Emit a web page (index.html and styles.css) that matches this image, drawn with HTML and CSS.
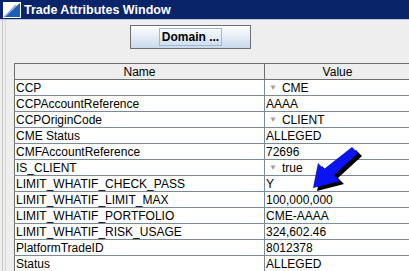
FILE: index.html
```html
<!DOCTYPE html>
<html lang="en">
<head>
    <meta charset="UTF-8">
    <title>Trade Attributes Window</title>
    <link rel="stylesheet" href="styles.css">
</head>
<body>

<div class="titlebar">
    <svg class="app-icon" width="18" height="16" viewBox="0 0 18 16">
        <rect x="0" y="0" width="18" height="16" fill="#ffffff"/>
        <path d="M1 15 C5 13 8 9 17 1 L17 15 Z" fill="#1d5fb8"/>
        <path d="M1 15 C5 12 9 7 13 3" stroke="#7aa8e0" stroke-width="1.5" fill="none"/>
    </svg>
    <span class="title">Trade Attributes Window</span>
</div>

<div class="window">
    <div class="edge"></div>
    <div class="panel">
        <div class="toolbar">
            <button class="domain-btn"><span class="focus">Domain ...</span></button>
        </div>

        <table class="attrs">
            <thead>
                <tr><th class="col-name">Name</th><th>Value</th></tr>
            </thead>
            <tbody>
                <tr><td>CCP</td><td><span class="combo">&#9660;</span>CME</td></tr>
                <tr><td>CCPAccountReference</td><td>AAAA</td></tr>
                <tr><td>CCPOriginCode</td><td><span class="combo">&#9660;</span>CLIENT</td></tr>
                <tr><td>CME Status</td><td>ALLEGED</td></tr>
                <tr><td>CMFAccountReference</td><td>72696</td></tr>
                <tr><td>IS_CLIENT</td><td><span class="combo">&#9660;</span>true</td></tr>
                <tr><td>LIMIT_WHATIF_CHECK_PASS</td><td>Y</td></tr>
                <tr><td>LIMIT_WHATIF_LIMIT_MAX</td><td>100,000,000</td></tr>
                <tr><td>LIMIT_WHATIF_PORTFOLIO</td><td>CME-AAAA</td></tr>
                <tr><td>LIMIT_WHATIF_RISK_USAGE</td><td>324,602.46</td></tr>
                <tr><td>PlatformTradeID</td><td>8012378</td></tr>
                <tr><td>Status</td><td>ALLEGED</td></tr>
            </tbody>
        </table>

        <svg class="pointer" width="60" height="50" viewBox="0 0 60 50">
            <path d="M48 4 L54 10 L30 32 L36 38 L9 45 L14 20 L20 26 Z" fill="#000000"/>
            <path d="M44 1 L50 7 L26 29 L32 35 L5 42 L10 17 L16 23 Z" fill="#0a14f0"/>
        </svg>
    </div>
</div>

</body>
</html>
```

FILE: styles.css
```css
body {
    margin: 0;
    background-color: #eeeeee;
    font-family: "Liberation Sans", Arial, sans-serif;
    overflow: hidden;
    width: 409px;
    height: 271px;
}
.titlebar {
    height: 19px;
    background-color: #0a246a;
    border-bottom: 1px solid #b8c4e0;
    display: flex;
    align-items: center;
    color: #ffffff;
}
.app-icon {
    margin-left: 3px;
    margin-right: 3px;
}
.title {
    font-weight: bold;
    font-size: 12.5px;
}
.window {
    display: flex;
}
.edge {
    flex-shrink: 0;
    width: 2px;
    margin-left: 2px;
    border-left: 1px solid #c8c8c8;
    border-right: 1px solid #d8d8d8;
    height: 260px;
}
.panel {
    flex-shrink: 0;
    position: relative;
    margin-left: 8px;
    width: 397px;
}
.toolbar {
    padding-top: 5px;
    padding-left: 116px;
    height: 38px;
}
.domain-btn {
    width: 121px;
    height: 24px;
    border: 1px solid #6e6e6e;
    background: linear-gradient(#ffffff, #c9d9ec);
    padding: 0;
    font-family: "Liberation Sans", Arial, sans-serif;
    font-weight: bold;
    font-size: 12px;
    color: #000000;
}
.focus {
    display: inline-block;
    border: 1px solid #a3b8cc;
    padding: 1px 2px;
}
.attrs {
    border-collapse: collapse;
    width: 397px;
    font-size: 12px;
    border-top: 1px solid #6e6e6e;
    border-left: 1px solid #6e6e6e;
}
.attrs th {
    font-weight: normal;
    height: 15px;
    padding: 0;
    background-color: #eeeeee;
    border-bottom: 1px solid #6e6e6e;
    border-right: 1px solid #6e6e6e;
}
.col-name {
    width: 249px;
}
.attrs td {
    height: 15px;
    padding: 0 0 0 1px;
    background-color: #ffffff;
    border-bottom: 1px solid #7a8a99;
    border-right: 1px solid #7a8a99;
    white-space: nowrap;
}
.combo {
    color: #a0a0a0;
    font-size: 8px;
    margin: 0 5px 0 3px;
    vertical-align: 2px;
}
.pointer {
    position: absolute;
    left: 294px;
    top: 126px;
}
```
